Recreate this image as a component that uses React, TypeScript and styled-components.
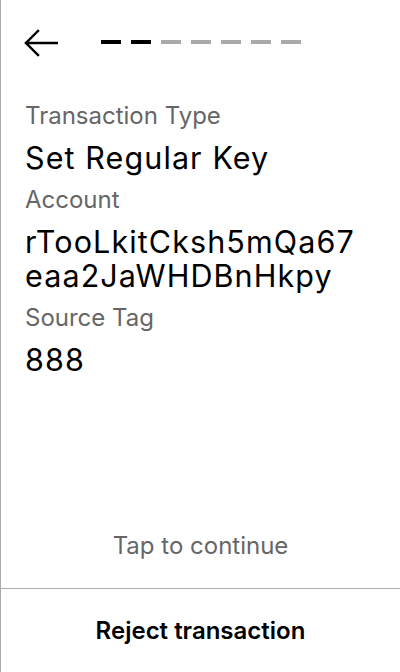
import styled, { createGlobalStyle } from "styled-components";

const GlobalStyle = createGlobalStyle`
  html, body {
    margin: 0;
    padding: 0;
    background: #fff;
  }
  body {
    font-family: Inter, "Noto Sans", "Liberation Sans", sans-serif;
    color: #000;
  }
  * {
    box-sizing: border-box;
  }
`;

const Screen = styled.div`
  display: flex;
  flex-direction: column;
  min-height: 100vh;
  height: 672px;
  border-left: 1px solid #aaa;
`;

const Header = styled.div`
  display: flex;
  align-items: flex-start;
  gap: 43px;
  padding: 29px 24px 0 23px;
  height: 57px;
`;

const BackButton = styled.button`
  display: flex;
  align-items: center;
  justify-content: center;
  padding: 0;
  border: none;
  background: none;
  cursor: pointer;
`;

const Steps = styled.div`
  display: flex;
  gap: 10px;
  margin-top: 11px;
`;

const Step = styled.div<{ $done: boolean }>`
  width: 20px;
  height: 4px;
  background: ${({ $done }) => ($done ? "#000" : "#aaa")};
`;

const Details = styled.div`
  display: flex;
  flex-direction: column;
  padding: 0 40px 0 24px;
  margin-top: 44px;
`;

const Label = styled.div`
  font-size: 24px;
  line-height: 30px;
  color: #666;
  margin-top: 10px;

  &:first-child {
    margin-top: 0;
  }
`;

const Value = styled.div`
  font-size: 30.5px;
  line-height: 34px;
  letter-spacing: 1.1px;
  color: #000;
  margin-top: 10px;
  word-break: break-all;
`;

const Spacer = styled.div`
  flex: 1;
`;

const TapHint = styled.div`
  text-align: center;
  font-size: 24px;
  line-height: 30px;
  color: #666;
  padding-bottom: 27px;
`;

const RejectButton = styled.button`
  height: 84px;
  border: none;
  border-top: 1px solid #aaa;
  background: #fff;
  font-family: inherit;
  font-size: 24px;
  font-weight: 600;
  color: #000;
  cursor: pointer;
`;

const ArrowIcon = () => (
  <svg width="34" height="28" viewBox="0 0 34 28" fill="none">
    <path
      d="M2 14 H33 M14 2 L2 14 L14 26"
      stroke="#000"
      strokeWidth="2.4"
      strokeLinecap="square"
    />
  </svg>
);

const fields = [
  { label: "Transaction Type", value: "Set Regular Key" },
  { label: "Account", value: "rTooLkitCksh5mQa67eaa2JaWHDBnHkpy" },
  { label: "Source Tag", value: "888" },
];

const App = () => {
  return (
    <Screen>
      <GlobalStyle />
      <Header>
        <BackButton aria-label="Back">
          <ArrowIcon />
        </BackButton>
        <Steps>
          {Array.from({ length: 7 }).map((_, i) => (
            <Step key={i} $done={i < 2} />
          ))}
        </Steps>
      </Header>

      <Details>
        {fields.map((f) => (
          <>
            <Label key={f.label}>{f.label}</Label>
            <Value key={f.label + "-v"}>{f.value}</Value>
          </>
        ))}
      </Details>

      <Spacer />
      <TapHint>Tap to continue</TapHint>
      <RejectButton>Reject transaction</RejectButton>
    </Screen>
  );
};

export default App;
